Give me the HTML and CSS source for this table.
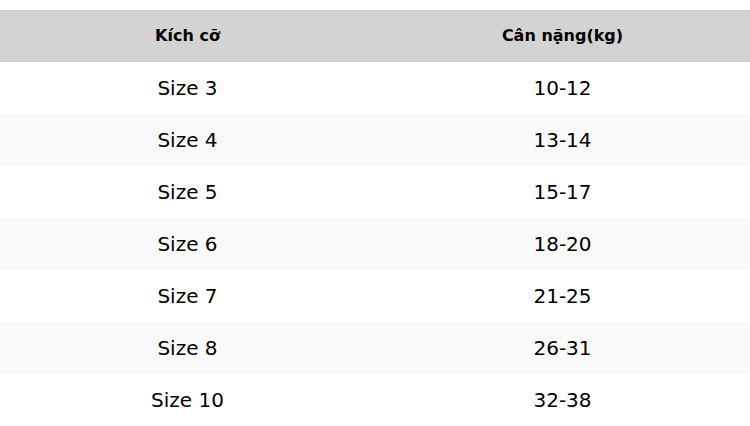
FILE: index.html
```html
<!DOCTYPE html>
<html lang="vi">
<head>
<meta charset="utf-8">
<link rel="stylesheet" href="styles.css">
</head>
<body>
<table class="size-table">
  <thead>
    <tr><th>Kích cỡ</th><th>Cân nặng(kg)</th></tr>
  </thead>
  <tbody>
    <tr><td>Size 3</td><td>10-12</td></tr>
    <tr><td>Size 4</td><td>13-14</td></tr>
    <tr><td>Size 5</td><td>15-17</td></tr>
    <tr><td>Size 6</td><td>18-20</td></tr>
    <tr><td>Size 7</td><td>21-25</td></tr>
    <tr><td>Size 8</td><td>26-31</td></tr>
    <tr><td>Size 10</td><td>32-38</td></tr>
  </tbody>
</table>
</body>
</html>
```
FILE: styles.css
```css
html, body {
  margin: 0;
  padding: 0;
  background: #fff;
}
body {
  padding-top: 10px;
  font-family: "DejaVu Sans", sans-serif;
  color: #000;
}
.size-table {
  width: 100%;
  border-collapse: collapse;
  table-layout: fixed;
}
.size-table th {
  background: #d3d3d3;
  font-size: 16px;
  font-weight: bold;
  line-height: 20px;
  padding: 16px 0;
  text-align: center;
}
.size-table td {
  font-size: 20px;
  line-height: 24px;
  padding: 14px 0;
  text-align: center;
}
.size-table tbody tr:nth-child(even) td {
  background: #f9f9f9;
}
```
